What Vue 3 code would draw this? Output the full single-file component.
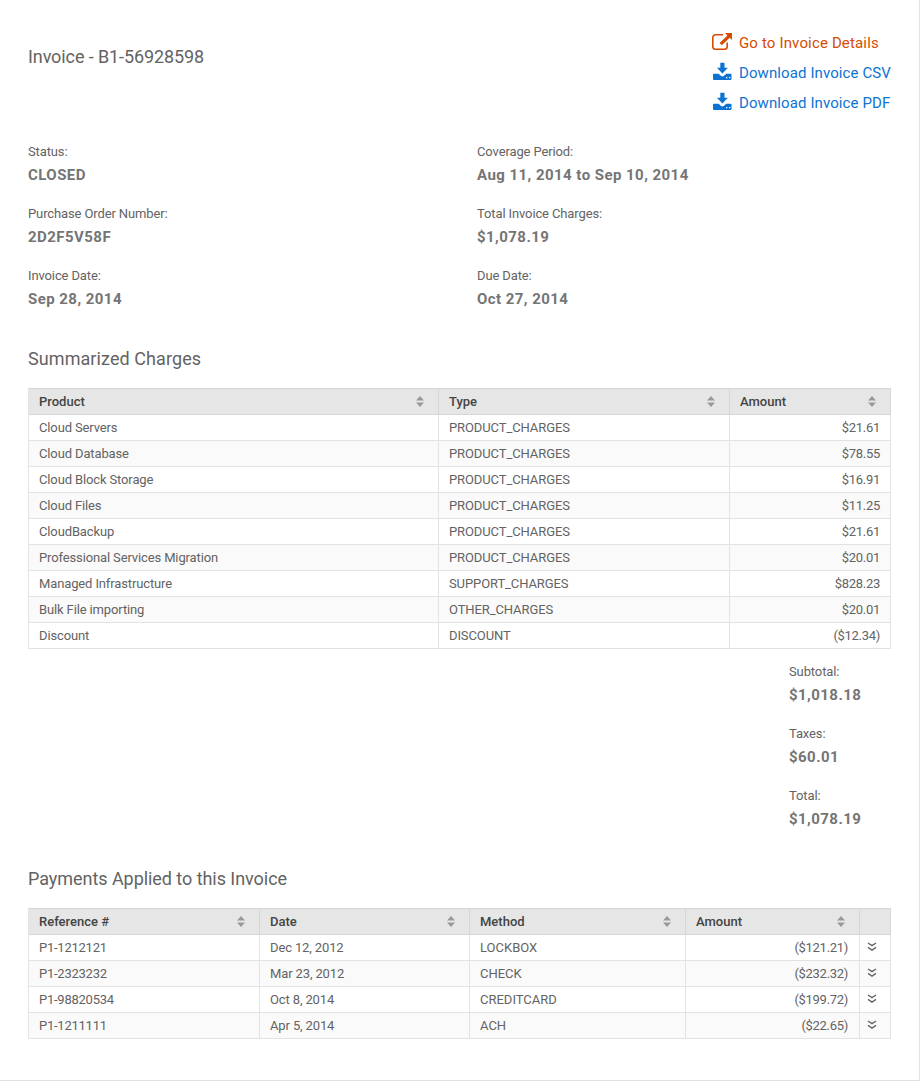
<script setup>
const details = [
  { label: 'Status:', value: 'CLOSED' },
  { label: 'Coverage Period:', value: 'Aug 11, 2014 to Sep 10, 2014' },
  { label: 'Purchase Order Number:', value: '2D2F5V58F' },
  { label: 'Total Invoice Charges:', value: '$1,078.19' },
  { label: 'Invoice Date:', value: 'Sep 28, 2014' },
  { label: 'Due Date:', value: 'Oct 27, 2014' },
]
const charges = [
  ['Cloud Servers', 'PRODUCT_CHARGES', '$21.61'],
  ['Cloud Database', 'PRODUCT_CHARGES', '$78.55'],
  ['Cloud Block Storage', 'PRODUCT_CHARGES', '$16.91'],
  ['Cloud Files', 'PRODUCT_CHARGES', '$11.25'],
  ['CloudBackup', 'PRODUCT_CHARGES', '$21.61'],
  ['Professional Services Migration', 'PRODUCT_CHARGES', '$20.01'],
  ['Managed Infrastructure', 'SUPPORT_CHARGES', '$828.23'],
  ['Bulk File importing', 'OTHER_CHARGES', '$20.01'],
  ['Discount', 'DISCOUNT', '($12.34)'],
]
const totals = [
  { label: 'Subtotal:', value: '$1,018.18' },
  { label: 'Taxes:', value: '$60.01' },
  { label: 'Total:', value: '$1,078.19' },
]
const payments = [
  ['P1-1212121', 'Dec 12, 2012', 'LOCKBOX', '($121.21)'],
  ['P1-2323232', 'Mar 23, 2012', 'CHECK', '($232.32)'],
  ['P1-98820534', 'Oct 8, 2014', 'CREDITCARD', '($199.72)'],
  ['P1-1211111', 'Apr 5, 2014', 'ACH', '($22.65)'],
]
const downloads = ['Download Invoice CSV', 'Download Invoice PDF']
</script>

<template>
  <main class="page">
    <header class="top">
      <h1>Invoice - B1-56928598</h1>
      <nav class="actions">
        <a class="action details-link">
          <svg class="icon" width="22" height="20" viewBox="0 0 22 20">
            <path d="M12 2.800H4.500A2.700 2.700 0 0 0 1.800 5.500v9a2.700 2.700 0 0 0 2.700 2.700h9a2.700 2.700 0 0 0 2.700-2.700V10.500" fill="none" stroke="currentColor" stroke-width="1.600" />
            <path d="M14 1h7v7l-2.300-2.300-7.900 7.600-2.200-2.200 7.800-7.700z" fill="currentColor" />
          </svg>
          <span>Go to Invoice Details</span>
        </a>
        <a v-for="d in downloads" :key="d" class="action">
          <svg class="icon" width="22" height="20" viewBox="0 0 22 20">
            <path d="M9.300 0.700h4.200v5.100h3.400l-5.500 5.600-5.500-5.600h3.400z" fill="currentColor" />
            <path fill-rule="evenodd" d="M2.900 11.800h4.700l2.200 2q1.600 1.300 3.200 0l2.200-2h4.400q.9 0 .9.9v4.400q0 .9-.9.9H2.900q-.9 0-.9-.9v-4.400q0-.9.900-.9zM15 15v1.300h1.300V15zM18 15v1.300h1.300V15z" fill="currentColor" />
          </svg>
          <span>{{ d }}</span>
        </a>
      </nav>
    </header>

    <dl class="details">
      <div v-for="d in details" :key="d.label" class="field">
        <dt>{{ d.label }}</dt>
        <dd>{{ d.value }}</dd>
      </div>
    </dl>

    <h2 class="charges-title">Summarized Charges</h2>
    <table>
      <colgroup><col class="c-product" /><col class="c-type" /><col class="c-sum" /></colgroup>
      <thead>
        <tr>
          <th v-for="h in ['Product', 'Type', 'Amount']" :key="h">
            <div class="head"><span>{{ h }}</span><svg class="sort" width="8" height="11" viewBox="0 0 8 11"><path d="M0 4.500 4 0l4 4.500zM0 6.500h8L4 11z" /></svg></div>
          </th>
        </tr>
      </thead>
      <tbody>
        <tr v-for="row in charges" :key="row[0]">
          <td>{{ row[0] }}</td>
          <td class="code">{{ row[1] }}</td>
          <td class="num">{{ row[2] }}</td>
        </tr>
      </tbody>
    </table>

    <dl class="totals">
      <div v-for="t in totals" :key="t.label" class="field">
        <dt>{{ t.label }}</dt>
        <dd>{{ t.value }}</dd>
      </div>
    </dl>

    <h2 class="payments-title">Payments Applied to this Invoice</h2>
    <table>
      <colgroup><col class="c-ref" /><col class="c-date" /><col class="c-method" /><col class="c-paid" /><col class="c-more" /></colgroup>
      <thead>
        <tr>
          <th v-for="h in ['Reference #', 'Date', 'Method', 'Amount']" :key="h">
            <div class="head"><span>{{ h }}</span><svg class="sort" width="8" height="11" viewBox="0 0 8 11"><path d="M0 4.500 4 0l4 4.500zM0 6.500h8L4 11z" /></svg></div>
          </th>
          <th></th>
        </tr>
      </thead>
      <tbody>
        <tr v-for="row in payments" :key="row[0]">
          <td class="ref">{{ row[0] }}</td>
          <td>{{ row[1] }}</td>
          <td class="method">{{ row[2] }}</td>
          <td class="num paid">{{ row[3] }}</td>
          <td class="more"><svg width="10" height="10" viewBox="0 0 10 10"><path d="M1 1 5 3.700 9 1M1 5.400 5 8.100l4-2.700" /></svg></td>
        </tr>
      </tbody>
    </table>
  </main>
</template>

<style>
body { margin: 0; background: #fff; }
</style>

<style scoped>
.page {
  box-sizing: border-box;
  width: 920px;
  height: 1081px;
  padding: 28px 28px 0;
  border-right: 1px solid #e3e3e3;
  border-bottom: 1px solid #e3e3e3;
  background: #fff;
  color: #636363;
  font: 13px/20px Roboto, "Liberation Sans", sans-serif;
}
.top { display: flex; justify-content: space-between; height: 114px; }
h1, h2 { margin: 0; font-size: 18px; font-weight: 400; line-height: 24px; }
h1 { padding-top: 17px; letter-spacing: -0.1px; }
.actions { width: 180px; }
.action { display: flex; align-items: center; height: 30px; color: #0c73d2; font-size: 15px; letter-spacing: 0.1px; white-space: nowrap; }
.details-link { color: #d64b00; letter-spacing: 0.15px; }
.icon { flex: none; margin-right: 6px; margin-top: -2px; }
dl { margin: 0; }
dt { line-height: 20px; letter-spacing: -0.12px; }
dd { margin: 0; padding-top: 1px; color: #757575; font-size: 15px; font-weight: 700; line-height: 24px; letter-spacing: 0.45px; }
.field { height: 62px; }
.details { display: grid; grid-template-columns: 449px 1fr; }
.charges-title { padding: 19px 0 17px; letter-spacing: 0.08px; }
table { width: 863px; table-layout: fixed; border-spacing: 0; border-left: 1px solid #e3e3e3; }
th, td { box-sizing: border-box; height: 26px; padding: 0 10px; border-right: 1px solid #e3e3e3; border-bottom: 1px solid #e3e3e3; text-align: left; line-height: 25px; }
td { letter-spacing: -0.13px; }
th { height: 27px; border-color: #d6d6d6; border-top: 1px solid #d6d6d6; background: #e6e6e6; color: #444; font-weight: 500; }
tbody tr:nth-child(even) { background: #fafafa; }
.head { display: flex; justify-content: space-between; align-items: center; height: 25px; }
.sort { margin-right: 4px; fill: #999; }
td.num { text-align: right; letter-spacing: -0.3px; }
td.code { letter-spacing: -0.1px; }
td.ref { letter-spacing: -0.25px; }
td.method { letter-spacing: 0; }
td.paid { padding-right: 11px; }
td.more { padding: 0 7px; line-height: 0; }
.more svg { display: block; margin-top: -1px; }
.more path { fill: none; stroke: #666; stroke-width: 1.4; }
.c-product { width: 410px; }
.c-type { width: 291px; }
.c-sum { width: 161px; }
.c-ref { width: 231px; }
.c-date { width: 210px; }
.c-method { width: 216px; }
.c-paid { width: 174px; }
.c-more { width: 31px; }
.totals { margin-left: 761px; padding-top: 13px; }
.payments-title { padding: 19px 0 17px; letter-spacing: -0.05px; }
</style>
